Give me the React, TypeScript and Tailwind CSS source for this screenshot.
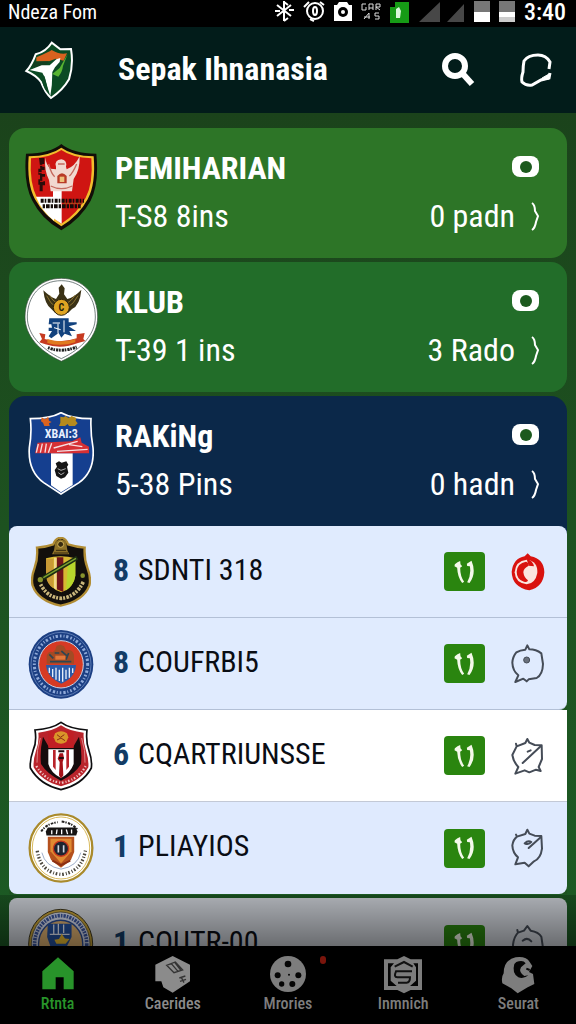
import React from 'react';

type CardData = {
  title: string;
  info: string;
  total: string;
  className: string;
  crest: React.ReactNode;
};

type TeamData = {
  rank: string;
  name: string;
  className: string;
  crest: React.ReactNode;
  action: React.ReactNode;
};

function RedShield() {
  return (
    <svg width="74" height="87" viewBox="70 70 222 261">
      <path d="M182 70Q215 98 287 99Q296 190 270 240Q240 295 182 329Q122 295 95 240Q68 190 76 99Q150 98 182 70Z" fill="#120d08" />
      <path d="M182 81Q215 105 279 107Q286 190 261 236Q235 285 182 317Q130 285 103 236Q78 190 84 107Q150 105 182 81Z" fill="#f2bd2c" />
      <path d="M182 88Q215 111 272 113Q278 188 255 231Q230 278 182 309Q135 278 109 231Q86 188 91 113Q150 111 182 88Z" fill="#cf1512" />
      <path d="M106 228H160V300Q122 270 106 228Z" fill="#fff" />
      <path d="M157 208H183V309L157 292Z" fill="#fff" />
      <path d="M134 110Q136 134 150 144L166 146L166 138Q160 118 182 116Q200 118 196 138L198 146Q222 138 237 107Q238 150 219 175L214 212H150L145 178Q130 150 134 110Z" fill="#f1d9d0" />
      <path d="M144 130Q152 160 162 168M228 130Q216 158 206 166M150 196Q182 212 215 196M172 130H192" stroke="#c56a5e" strokeWidth="4" fill="none" />
      <path d="M170 166Q184 150 198 166V188H170Z" fill="#b93a26" />
      <path d="M177 168H191V184H177Z" fill="#edc07a" />
      <path d="M115 112h16v18h-6v8h7v10h-9v12h10v8h-8v14h8v12h-7v18h-9v-20h-4v-16h5v-14h-5v-18h6z" fill="#2a0c0a" />
      <path d="M116 134h12M114 156h14M118 182h10" stroke="#cf1512" strokeWidth="3" />
      <path d="M120 240H250" stroke="#150c09" strokeWidth="12" strokeDasharray="9 3 5 4" />
      <path d="M126 257H240" stroke="#150c09" strokeWidth="12" strokeDasharray="7 3 11 3" />
      <path d="M190 248H246" stroke="#8c6a1c" strokeWidth="3" strokeDasharray="6 4" />
    </svg>
  );
}

function WingedCrest() {
  return (
    <svg width="74" height="84" viewBox="70 43 222 252">
      <path d="M182 44C250 44 291 95 291 160C291 215 250 262 182 293C114 262 73 215 73 160C73 95 114 44 182 44Z" fill="#fff" stroke="#34483a" strokeWidth="2" />
      <path d="M182 51C245 51 284 98 284 160C284 210 246 254 182 285C118 254 80 210 80 160C80 98 119 51 182 51Z" fill="#fff" stroke="#344" strokeWidth="2" />
      <path d="M128 80Q148 100 166 106L176 90L174 72L183 62L192 74L190 92L200 106Q222 100 242 78Q238 125 214 136L202 148H164L152 136Q132 122 128 80Z" fill="#3b3216" />
      <path d="M138 96Q150 122 166 130M232 96Q218 122 202 130M146 94Q156 112 168 118M224 94Q212 112 200 118" stroke="#8c7430" strokeWidth="3" fill="none" />
      <circle cx="182" cy="131" r="24" fill="#e0a422" stroke="#2d2410" strokeWidth="3" />
      <text x="182" y="141" textAnchor="middle" fontSize="30" fontWeight="700" fill="#1f1a0c">C</text>
      <path d="M146 164h58v12h24v6l-24 6 22 14h-20l8 16-22-8-10 12-8-14-22 16-8-6 10-16h-10v-10h10l-2-10h-8z" fill="#12427e" />
      <path d="M156 178h22M190 170v36M160 192l20 6M172 180v30" stroke="#fff" strokeWidth="3" fill="none" />
      <path d="M116 208L134 212L132 226Q182 240 228 224L228 212L252 208L248 226L254 232L232 238Q182 258 134 242L116 236L124 226Z" fill="#c63a20" />
      <path d="M140 226Q182 240 224 226V236Q182 250 140 238Z" fill="#e07a1f" />
      <path d="M142 252Q182 268 228 250" stroke="#222" strokeWidth="9" strokeDasharray="5 3 7 2" fill="none" />
    </svg>
  );
}

function BlueShield() {
  return (
    <svg width="66" height="83" viewBox="83 68 198 249">
      <path d="M182 70Q215 88 272 88Q270 130 278 175Q284 245 236 280L182 314L130 280Q82 245 87 175Q95 130 90 88Q150 88 182 70Z" fill="#153f8f" stroke="#fff" strokeWidth="5" />
      <path d="M152 192H217V287L182 309L152 288Z" fill="#fff" />
      <path d="M124 84l10 6 10-8 2 12 8 4-8 4 2 8h-16l-4-10-6-4z" fill="#d9621e" />
      <path d="M180 82l10 2 6-4 8 6 10-6 14 6-2 8 6 8-8 8h-18l-4-6-8 6h-18l4-10z" fill="#b58a1d" />
      <text x="183" y="146" textAnchor="middle" fontSize="36" fontWeight="700" fill="#e8f1ff">XBAI:3</text>
      <path d="M112 160L215 156L240 144L244 160L266 172V192H104Z" fill="#d63034" />
      <path d="M114 164l-6 26M126 163l-6 27M138 163l-4 27M154 162l-10 28M160 176L232 156M170 186L262 180M206 166l40 6" stroke="#f5dfe2" strokeWidth="4" />
      <path d="M166 222l10-6 8 4 14-4 6 10-4 6 4 18-10 14-12 4-14-8-5-18 7-10z" fill="#151515" />
      <path d="M172 238l10 5 14-5M174 250l8 6 10-6" stroke="#aaa" strokeWidth="3" fill="none" />
    </svg>
  );
}

function GoldCrest() {
  return (
    <svg width="60" height="70" viewBox="93 44 180 210">
      <path d="M182 46Q198 48 204 66Q230 74 254 76Q252 110 262 136Q274 168 268 190Q250 236 182 250Q114 236 98 190Q92 168 104 136Q114 110 111 76Q138 74 160 66Q166 48 182 46Z" fill="#120f0c" stroke="#b18d35" strokeWidth="7" />
      <path d="M166 58l14-8 18 6 4 28 6 12h-52l6-12z" fill="#8d7128" />
      <circle cx="182" cy="66" r="9" fill="#382b10" stroke="#d1b256" strokeWidth="3" />
      <path d="M168 84h30M162 92h42" stroke="#34280e" strokeWidth="3" />
      <path d="M138 108Q182 96 226 108V160Q222 196 184 210Q144 196 138 160Z" fill="#d7b832" />
      <path d="M138 110h22v88Q140 184 138 160Z" fill="#c99a35" />
      <path d="M170 105h20v104l-20-8z" fill="#701419" />
      <path d="M162 106h8v96l-8-4z" fill="#f3d98a" />
      <path d="M204 122l22-8v46Q222 188 198 204Z" fill="#b7d62c" />
      <path d="M128 168L232 106" stroke="#1c2d12" strokeWidth="13" />
      <path d="M130 166L228 108" stroke="#7da22e" strokeWidth="4" />
      <circle cx="121" cy="172" r="8" fill="#87922d" />
      <circle cx="248" cy="160" r="7" fill="#87922d" />
      <path d="M122 186Q142 226 184 228Q228 224 250 178" stroke="#c9b67c" strokeWidth="11" strokeDasharray="6 4 8 3" fill="none" />
    </svg>
  );
}

function RoundBlueCrest() {
  return (
    <svg width="66" height="70" viewBox="84 324 198 210">
      <ellipse cx="183" cy="430" rx="97" ry="103" fill="#1c3f83" />
      <ellipse cx="183" cy="430" rx="90" ry="96" fill="none" stroke="#7c98cc" strokeWidth="2" />
      <ellipse cx="183" cy="430" rx="80" ry="85" fill="none" stroke="#8fa9d8" strokeWidth="9" strokeDasharray="5 6 3 5 7 6" />
      <ellipse cx="183" cy="430" rx="67" ry="71" fill="#d63a24" stroke="#c9d4ea" strokeWidth="3" />
      <path d="M140 404q6-16 18-10l8-8 4-12 12-3 10 5 6 12q20-4 24 14v26h-82z" fill="#a34b24" />
      <path d="M148 400l12 12M164 396h14M184 390l16 14M206 396l-8 20M150 422h64" stroke="#2d4652" strokeWidth="5" />
      <path d="M166 404h30v12h-30z" fill="#e2783a" />
      <path d="M138 432H228Q226 470 184 488Q142 470 138 432Z" fill="#2b5aa8" />
      <path d="M148 440v16M158 444v24M168 440v36M178 446v34M188 440v42M198 446v28M208 440v30M218 442v14" stroke="#e8effa" strokeWidth="4" />
    </svg>
  );
}

function RedCrest() {
  return (
    <svg width="64" height="70" viewBox="86 61 192 210">
      <path d="M182 65Q208 84 260 88Q256 124 266 150Q276 178 273 202Q246 252 182 267Q118 252 90 202Q88 178 98 150Q110 124 104 88Q156 84 182 65Z" fill="#fff" stroke="#0d0d0f" strokeWidth="5" />
      <path d="M182 74Q208 92 250 96Q248 124 257 150Q266 178 264 200Q240 242 182 257Q124 242 100 200Q98 178 107 150Q117 124 114 96Q156 92 182 74Z" fill="#b9242b" />
      <path d="M128 108Q118 150 122 190Q140 220 182 240Q224 220 242 190Q246 150 236 108L218 140H146Z" fill="#150b0c" />
      <path d="M144 92H220V142H144Z" fill="#c01e24" />
      <path d="M164 98q18-12 36 0l4 12-6 14q-16 10-32 0l-6-14z" fill="#d9952a" />
      <path d="M170 102l10 8 12-8M170 118l12-6 12 8" stroke="#8a2c14" strokeWidth="3" fill="none" />
      <path d="M144 146H220V190Q210 218 182 232Q152 218 144 190Z" fill="#fff" />
      <path d="M158 148h8v60l-8-10zM198 148h8v50l-8 10z" fill="#b9242b" />
      <path d="M178 158h10l3 14-4 12 2 40-7 10-6-10 2-40-6-10z" fill="#a51218" />
      <path d="M174 152h18M176 172h14" stroke="#1b0b0b" strokeWidth="6" />
      <path d="M108 196Q134 240 182 246Q232 240 256 196" stroke="#f0c7c7" strokeWidth="7" strokeDasharray="5 6 3 5" fill="none" />
      <path d="M120 112Q108 150 110 186M244 112Q256 150 254 186" stroke="#dd8585" strokeWidth="3" fill="none" />
    </svg>
  );
}

function RoundGoldCrest() {
  return (
    <svg width="66" height="72" viewBox="82 336 200 216">
      <ellipse cx="182" cy="444" rx="95" ry="102" fill="#fff" stroke="#a98a2c" strokeWidth="7" />
      <ellipse cx="182" cy="444" rx="87" ry="94" fill="none" stroke="#d9b95a" strokeWidth="3" />
      <path d="M122 394Q138 370 172 366M184 364Q216 368 234 390" stroke="#23211f" strokeWidth="6" strokeDasharray="8 3 4 4" fill="none" />
      <path d="M142 382h84l6 12-4 12h-90l-2-12z" fill="#161413" />
      <path d="M154 390v12M170 388l-2 14M184 388v14M198 388l4 14M214 388v12" stroke="#fff" strokeWidth="4" />
      <path d="M142 410H222V456L212 480L182 504L152 480L142 456Z" fill="#b5511d" />
      <path d="M150 416H214V454L182 490L150 454Z" fill="#e08a31" />
      <circle cx="182" cy="446" r="23" fill="#1d2430" stroke="#c8371f" strokeWidth="4" />
      <path d="M174 436v22M190 436v22" stroke="#cfd7e2" strokeWidth="5" fill="none" />
      <path d="M156 482L182 496L210 482" stroke="#8b2f12" strokeWidth="6" fill="none" />
      <path d="M110 452Q120 518 182 524Q244 518 256 452" stroke="#4a463c" strokeWidth="10" strokeDasharray="5 6 3 5" fill="none" />
      <path d="M124 458Q134 500 182 508Q232 500 242 458" stroke="#6d83ad" strokeWidth="2" fill="none" />
    </svg>
  );
}

function YellowBlueCrest() {
  return (
    <svg width="66" height="72" viewBox="82 73 200 216">
      <ellipse cx="181" cy="181" rx="97" ry="105" fill="#c9a437" stroke="#3b351d" strokeWidth="3" />
      <ellipse cx="181" cy="181" rx="89" ry="97" fill="#d7dcec" stroke="#3b351d" strokeWidth="2" />
      <ellipse cx="181" cy="181" rx="79" ry="86" fill="none" stroke="#3c57a0" strokeWidth="11" strokeDasharray="7 3 5 3" />
      <ellipse cx="181" cy="181" rx="67" ry="72" fill="#e2b473" stroke="#2b4c93" strokeWidth="4" />
      <path d="M142 120h72v40l-20 40h-40l-14-40z" fill="#24519f" />
      <path d="M160 122v28M174 120v30M190 122v26M148 152h60" stroke="#e6ecf8" strokeWidth="4" />
      <path d="M184 150l10 14 14 2-12 14H168l-6-12 14-2z" fill="#f1c131" />
    </svg>
  );
}

const strokeProps = {
  fill: 'none',
  stroke: '#454c57',
  strokeWidth: 6,
  strokeLinejoin: 'round' as const,
  strokeLinecap: 'round' as const,
};

function RedBallIcon() {
  return (
    <svg width="34" height="38" viewBox="333 94 102 114">
      <path d="M374 104L383 95L392 104Q432 112 433 152Q430 196 388 206Q336 196 335 150Q340 110 374 104Z" fill="#d9120f" />
      <path d="M380 114Q414 118 412 154Q406 186 380 188Q346 184 344 152Q346 118 380 114Z" fill="#fbe5e0" />
      <path d="M378 120Q386 122 386 132Q370 140 370 152Q372 168 384 176Q382 184 372 180Q350 174 350 150Q352 124 378 120Z" fill="#d9120f" />
      <path d="M380 112Q398 116 402 134L386 132Z" fill="#d9120f" />
    </svg>
  );
}

function BubbleDotIcon() {
  return (
    <svg width="34" height="40" viewBox="333 370 102 120">
      <path {...strokeProps} d="M376 387L382 374L388 386Q408 386 424 398L429 430Q428 462 410 472L386 476L380 482L370 474L346 484L355 464Q338 450 337 426Q338 408 349 395Q360 388 376 387Z" />
      <circle cx="380" cy="418" r="9" fill="#6a717c" stroke="#454c57" strokeWidth="3" />
    </svg>
  );
}

function BubbleSlashIcon() {
  return (
    <svg width="34" height="38" viewBox="333 106 102 114">
      <path {...strokeProps} d="M348 126L350 134L376 124L382 112L388 123L404 130L425 131L426 172L416 196L422 208L408 204L388 212L374 206L346 216L355 196Q340 180 337 160L350 134" />
      <path {...strokeProps} d="M368 184L422 134" />
      <path {...strokeProps} d="M383 150L392 146" />
    </svg>
  );
}

function BubbleEyeIcon() {
  return (
    <svg width="34" height="40" viewBox="333 384 102 120">
      <path {...strokeProps} d="M348 404L351 410L376 402L382 389L388 401L404 407L424 408L426 446Q422 476 402 484L386 499L374 488L346 493L354 472Q338 458 337 436Q340 418 351 410" />
      <path {...strokeProps} d="M374 430Q384 420 394 426Q386 436 374 430M386 444L422 412" />
    </svg>
  );
}

function BubbleFaceIcon() {
  return (
    <svg width="34" height="40" viewBox="669 118 102 120">
      <path {...strokeProps} d="M688 136L690 144L708 138L718 124L728 138Q752 142 760 156L765 190Q762 218 742 226L712 230L684 234L688 214Q674 200 675 180Q678 156 690 144" />
      <path {...strokeProps} d="M704 168Q718 156 730 170" />
    </svg>
  );
}

const cards: CardData[] = [
  {
    title: 'PEMIHARIAN',
    info: 'T-S8 8ins',
    total: '0 padn',
    className: 'rounded-2xl bg-[#2d7527]',
    crest: <RedShield />,
  },
  {
    title: 'KLUB',
    info: 'T-39 1 ins',
    total: '3 Rado',
    className: 'rounded-2xl bg-[#226d29]',
    crest: <WingedCrest />,
  },
  {
    title: 'RAKiNg',
    info: '5-38 Pins',
    total: '0 hadn',
    className: 'rounded-t-2xl bg-[#0b2849]',
    crest: <BlueShield />,
  },
];

const teams: TeamData[] = [
  {
    rank: '8',
    name: 'SDNTI 318',
    className: 'rounded-t-lg border-b border-[#b3c0d6] bg-[#e0ebfe]',
    crest: <GoldCrest />,
    action: <RedBallIcon />,
  },
  {
    rank: '8',
    name: 'COUFRBI5',
    className: 'rounded-br-lg border-b border-[#b3c0d6] bg-[#e0ebfe]',
    crest: <RoundBlueCrest />,
    action: <BubbleDotIcon />,
  },
  {
    rank: '6',
    name: 'CQARTRIUNSSE',
    className: 'border-b border-[#c3c9d6] bg-white',
    crest: <RedCrest />,
    action: <BubbleSlashIcon />,
  },
  {
    rank: '1',
    name: 'PLIAYIOS',
    className: 'rounded-b-lg bg-[#dfeafe]',
    crest: <RoundGoldCrest />,
    action: <BubbleEyeIcon />,
  },
];

const tabs = [
  {
    label: 'Rtnta',
    className: 'text-[#28932a]',
    icon: <path d="M55 0L102 42V96H72V60H48V96H8V42Z" fill="currentColor" />,
  },
  {
    label: 'Caerides',
    className: 'text-[#8b8b8b]',
    icon: (
      <>
        <path d="M54 -4L106 22V72L54 106L26 90L20 72H2V22Z" fill="currentColor" />
        <path d="M36 24L62 14L84 38L58 46ZM50 19L70 42M60 15L78 38" fill="none" stroke="#333" strokeWidth="4" />
        <path d="M74 62L92 56M76 72L94 66M80 60L88 76" fill="none" stroke="#333" strokeWidth="4" />
      </>
    ),
  },
  {
    label: 'Mrories',
    className: 'text-[#7d7d7d]',
    icon: (
      <>
        <circle cx="55" cy="50" r="54" fill="currentColor" />
        <g fill="#050505">
          <circle cx="55" cy="20" r="10" />
          <circle cx="24" cy="54" r="9" />
          <circle cx="86" cy="54" r="9" />
          <circle cx="68" cy="80" r="9" />
          <circle cx="36" cy="80" r="8" />
          <circle cx="58" cy="52" r="3" />
        </g>
      </>
    ),
  },
  {
    label: 'Inmnich',
    className: 'text-[#7d7d7d]',
    icon: (
      <>
        <path d="M-2 6H38L58 -4L78 6H112V98H78L58 108L38 98H-2Z" fill="currentColor" />
        <path d="M10 18H28L18 30V70L36 86H10ZM100 18H86L94 30V70L76 86H100Z" fill="#050505" />
        <path d="M30 28L58 14L84 28" fill="none" stroke="#111" strokeWidth="6" />
        <path d="M82 42H34Q26 60 38 60H76Q76 76 66 76H40" fill="none" stroke="#111" strokeWidth="6" />
      </>
    ),
  },
  {
    label: 'Seurat',
    className: 'text-[#7d7d7d]',
    icon: (
      <>
        <path d="M48 0Q80 -4 90 14L98 26L88 44L100 50L104 80L84 90L54 108L34 92L8 78Q4 60 12 48Q12 8 48 0Z" fill="currentColor" />
        <path d="M50 14Q70 6 78 18L64 30Q56 44 74 56L86 54Q72 66 56 60Q36 48 44 20Z" fill="#050505" />
        <path d="M80 34L90 38" stroke="#050505" strokeWidth="6" />
      </>
    ),
  },
];

function StatusBar() {
  return (
    <div className="flex h-[27px] shrink-0 items-center justify-between bg-black pr-2.5 pb-1 pl-2 text-white">
      <span className="text-xl leading-5">Ndeza Fom</span>
      <div className="flex items-center gap-[9px]">
        <svg width="19" height="21" viewBox="0 0 19 21" fill="none" stroke="#fff" strokeWidth="2">
          <path d="M9 0V20M2 4L16 15M16 4L2 15M0 10H5M14 9H19M9 1L13 4M9 20L13 17" />
        </svg>
        <svg width="22" height="22" viewBox="0 0 22 22" fill="none" stroke="#fff" strokeWidth="2">
          <circle cx="12" cy="10" r="8" />
          <ellipse cx="12" cy="10" rx="2" ry="4" />
          <path d="M1 6L6 1M17 1L21 4M7 18L11 20" />
        </svg>
        <svg width="18" height="22" viewBox="0 0 18 22">
          <path d="M0 4H3L5 1H13L15 4H18V20H0Z" fill="#fff" />
          <circle cx="9" cy="11" r="5" fill="#000" />
          <circle cx="9" cy="11" r="2" fill="#fff" />
        </svg>
        <svg width="20" height="20" viewBox="0 0 20 20" fill="none" stroke="#ddd">
          <path d="M5 2H1V8H5V5M8 8V2H12V8M8 6H12M15 8V2H19V5H15L19 8M3 17L8 11V17M3 15H9M18 11H14V14H18V17H14" />
        </svg>
        <svg width="20" height="22" viewBox="0 0 20 22">
          <path d="M0 6H5V1H19V22H0Z" fill="#169b16" />
          <path d="M6 8L9 6L11 10L10 17H6Z" fill="#d9f7d9" />
        </svg>
        <svg width="46" height="20" viewBox="0 0 46 20" fill="#474747">
          <path d="M21 0V20H0ZM45 2V20H28Z" />
        </svg>
        <svg width="41" height="21" viewBox="0 0 41 21">
          <path d="M0 0H16V11H0ZM25 0H41V11H25Z" fill="#777" />
          <path d="M0 11H16V21H0ZM25 11H41V16H25Z" fill="#fff" />
          <path d="M25 16H41V21H25Z" fill="#ccc" />
        </svg>
        <span className="text-2xl leading-5 font-medium">3:40</span>
      </div>
    </div>
  );
}

function Header() {
  return (
    <header className="flex h-[86px] shrink-0 items-center bg-[#021c1a] pr-6">
      <div className="flex w-[118px] shrink-0 pl-6">
        <svg width="50" height="60" viewBox="75 114 150 180">
          <path d="M158 122L184 142L216 141Q224 190 210 232Q192 264 156 288Q138 272 126 240Q112 220 82 207Q98 190 110 157Q142 148 158 122Z" fill="#0b4a24" stroke="#fff" strokeWidth="6" />
          <path d="M112 166Q150 150 158 144Q180 158 204 154L194 176L170 170L150 178L112 178Z" fill="#d8621f" />
          <path d="M106 180L150 178L138 192L96 196Z" fill="#123f20" />
          <path d="M92 204L128 190L152 190L172 172L184 168L182 180L168 196L160 210Q160 250 154 282Q146 260 138 228L130 212Z" fill="#fff" />
          <path d="M206 156L182 198L160 216L178 224Q190 210 192 192Z" fill="#58b332" />
          <path d="M130 240Q134 262 150 276L136 222L114 214Z" fill="#0b4a24" />
        </svg>
      </div>
      <h1 className="flex-1 pb-0.5 text-[32px] leading-10 font-bold text-white">Sepak Ihnanasia</h1>
      <button type="button" aria-label="Search" className="mr-11">
        <svg width="33" height="34" viewBox="0 0 33 34" fill="none" stroke="#fff">
          <circle cx="13" cy="13" r="10" strokeWidth="6" />
          <path d="M20 20L30 31" strokeWidth="6" />
        </svg>
      </button>
      <button type="button" aria-label="Refresh">
        <svg width="33" height="36" viewBox="0 0 33 36" fill="none" stroke="#fff" strokeWidth="3">
          <path d="M30 17L31 10Q27 3 19 3Q9 3 5 9Q4 14 4 20Q2 26 3 30Q7 34 13 33L22 28L30 26L31 21" />
          <path d="M23 26L30 22V27L23 28Z" fill="#fff" strokeWidth="1" />
        </svg>
      </button>
    </header>
  );
}

function SummaryCard({ card }: { card: CardData }) {
  return (
    <a href="#" className={`flex h-[130px] pt-4 text-white ${card.className}`}>
      <div className="flex w-[104px] shrink-0 items-start justify-center">{card.crest}</div>
      <div className="flex flex-1 flex-col pl-0.5">
        <span className="text-[32px] leading-12 font-bold">{card.title}</span>
        <span className="text-[32px] leading-12">{card.info}</span>
      </div>
      <div className="flex flex-col items-end pr-[27px]">
        <div className="flex h-12 items-center pb-1">
          <svg width="28" height="21" viewBox="0 0 28 21">
            <rect width="27" height="21" rx="8" fill="#fff" />
            <circle cx="14" cy="11" r="6" fill="#1c5a1e" />
          </svg>
        </div>
        <div className="flex items-center gap-4">
          <span className="text-[32px] leading-12">{card.total}</span>
          <svg width="9" height="29" viewBox="0 0 9 29" fill="none" stroke="#fff" strokeWidth="2">
            <path d="M1 1Q4 3 4 9L7 14L5 20Q4 26 1 28" />
          </svg>
        </div>
      </div>
    </a>
  );
}

function StatsButton({ label }: { label: string }) {
  return (
    <button
      type="button"
      aria-label={label}
      className="flex h-[39px] w-[41px] items-center justify-center rounded bg-[#2a850f]"
    >
      <svg width="21" height="24" viewBox="160 119 62 72" fill="#f4f9ea">
        <path d="M170 126L178 122L179 132L184 138L178 142Q178 168 190 184L184 188Q170 170 169 142L161 138L162 132Z" />
        <path d="M198 130L212 121Q228 158 206 188L199 186Q212 162 207 138L199 137Z" />
      </svg>
    </button>
  );
}

function TeamRow({ team }: { team: TeamData }) {
  return (
    <li className={`flex h-[92px] items-center pr-[22px] ${team.className}`}>
      <div className="flex w-[104px] shrink-0 justify-center">{team.crest}</div>
      <span className="w-[25px] pb-1 text-[32px] leading-10 font-bold text-[#133c66]">{team.rank}</span>
      <span className="flex-1 pb-1 text-[30px] leading-10 text-[#0a0d14]">{team.name}</span>
      <div className="flex items-center gap-[26px]">
        <StatsButton label={`${team.name} stats`} />
        <button type="button" aria-label={`${team.name} chat`}>
          {team.action}
        </button>
      </div>
    </li>
  );
}

function TabBar() {
  return (
    <nav className="grid h-[78px] shrink-0 grid-cols-5 bg-black">
      {tabs.map((tab, index) => (
        <a
          key={tab.label}
          href="#"
          className={`relative flex flex-col items-center pt-2 ${tab.className}`}
        >
          <svg width="40" height="40" viewBox="-5 -10 120 120">
            {tab.icon}
          </svg>
          <span className="text-base leading-5 font-medium">{tab.label}</span>
          {index === 2 && (
            <span className="absolute top-2.5 right-5 h-2 w-1.5 rounded-full bg-[#7a150c]" />
          )}
        </a>
      ))}
    </nav>
  );
}

export default function App() {
  return (
    <div className="flex h-screen flex-col overflow-hidden bg-black font-['Roboto_Condensed','Liberation_Sans_Narrow',Roboto,sans-serif]">
      <StatusBar />
      <Header />
      <main className="relative min-h-0 flex-1 overflow-hidden bg-linear-to-b from-[#1b431b] via-[#1d5220] to-[#1c5a24] px-[9px] pt-[15px]">
        <div className="flex flex-col gap-1">
          {cards.map((card) => (
            <SummaryCard key={card.title} card={card} />
          ))}
        </div>
        <ul className="bg-linear-to-b from-[#0b2849] from-10% to-[#1d5220] to-10%">
          {teams.map((team) => (
            <TeamRow key={team.name} team={team} />
          ))}
        </ul>
        <ul className="mt-1">
          <TeamRow
            team={{
              rank: '1',
              name: 'COUTR-00',
              className: 'rounded-t-lg bg-[#d5d9e0]',
              crest: <YellowBlueCrest />,
              action: <BubbleFaceIcon />,
            }}
          />
        </ul>
        <div className="pointer-events-none absolute inset-x-0 bottom-0 h-[51px] bg-linear-to-b from-black/20 to-black/50" />
      </main>
      <TabBar />
    </div>
  );
}
